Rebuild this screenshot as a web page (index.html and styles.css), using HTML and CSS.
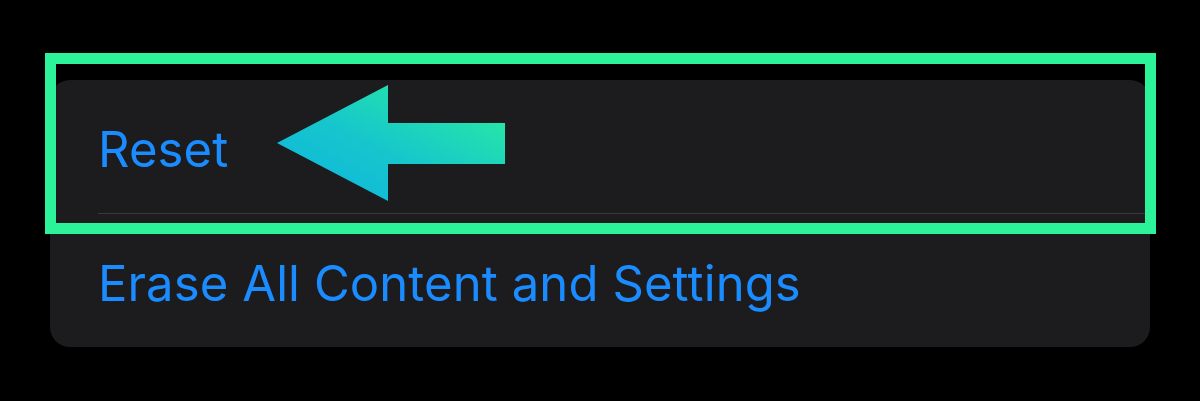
FILE: index.html
```html
<!DOCTYPE html>
<html>
<head>
<meta charset="utf-8">
<link rel="stylesheet" href="styles.css">
</head>
<body>
<div class="stage">
  <div class="card">
    <div class="row row-first">
      <span class="label">Reset</span>
    </div>
    <div class="row">
      <span class="label">Erase All Content and Settings</span>
    </div>
  </div>
  <div class="highlight"></div>
  <svg class="arrow" width="230" height="118" viewBox="0 0 230 118">
    <defs>
      <linearGradient id="g" x1="0" y1="1" x2="1" y2="0">
        <stop offset="0" stop-color="#0db4e0"/>
        <stop offset="0.45" stop-color="#16c6cc"/>
        <stop offset="1" stop-color="#2cf29a"/>
      </linearGradient>
    </defs>
    <path d="M0 58 L111 0 L111 38 L228 38 L228 79 L111 79 L111 116 Z" fill="url(#g)"/>
  </svg>
</div>
</body>
</html>
```
FILE: styles.css
```css
html, body {
  margin: 0;
  padding: 0;
  background: #000;
}
.stage {
  position: relative;
  width: 1200px;
  height: 401px;
  padding-top: 80px;
  box-sizing: border-box;
}
.card {
  margin: 0 50px;
  background: #1c1c1e;
  border-radius: 20px;
  overflow: hidden;
}
.row {
  height: 133px;
  display: flex;
  align-items: center;
  padding-left: 48px;
  box-sizing: border-box;
}
.row-first {
  height: 134px;
  border-bottom: 1px solid #3a3a3c;
  margin-left: 48px;
  padding-left: 0;
}
.label {
  font-family: Inter, "Liberation Sans", sans-serif;
  font-size: 49px;
  color: #1a8cff;
  letter-spacing: 0.1px;
  margin-top: 6px;
}
.highlight {
  position: absolute;
  left: 45px;
  top: 53px;
  width: 1111px;
  height: 181px;
  border: 11px solid #2cf29a;
  box-sizing: border-box;
}
.arrow {
  position: absolute;
  left: 277px;
  top: 85px;
}
```
